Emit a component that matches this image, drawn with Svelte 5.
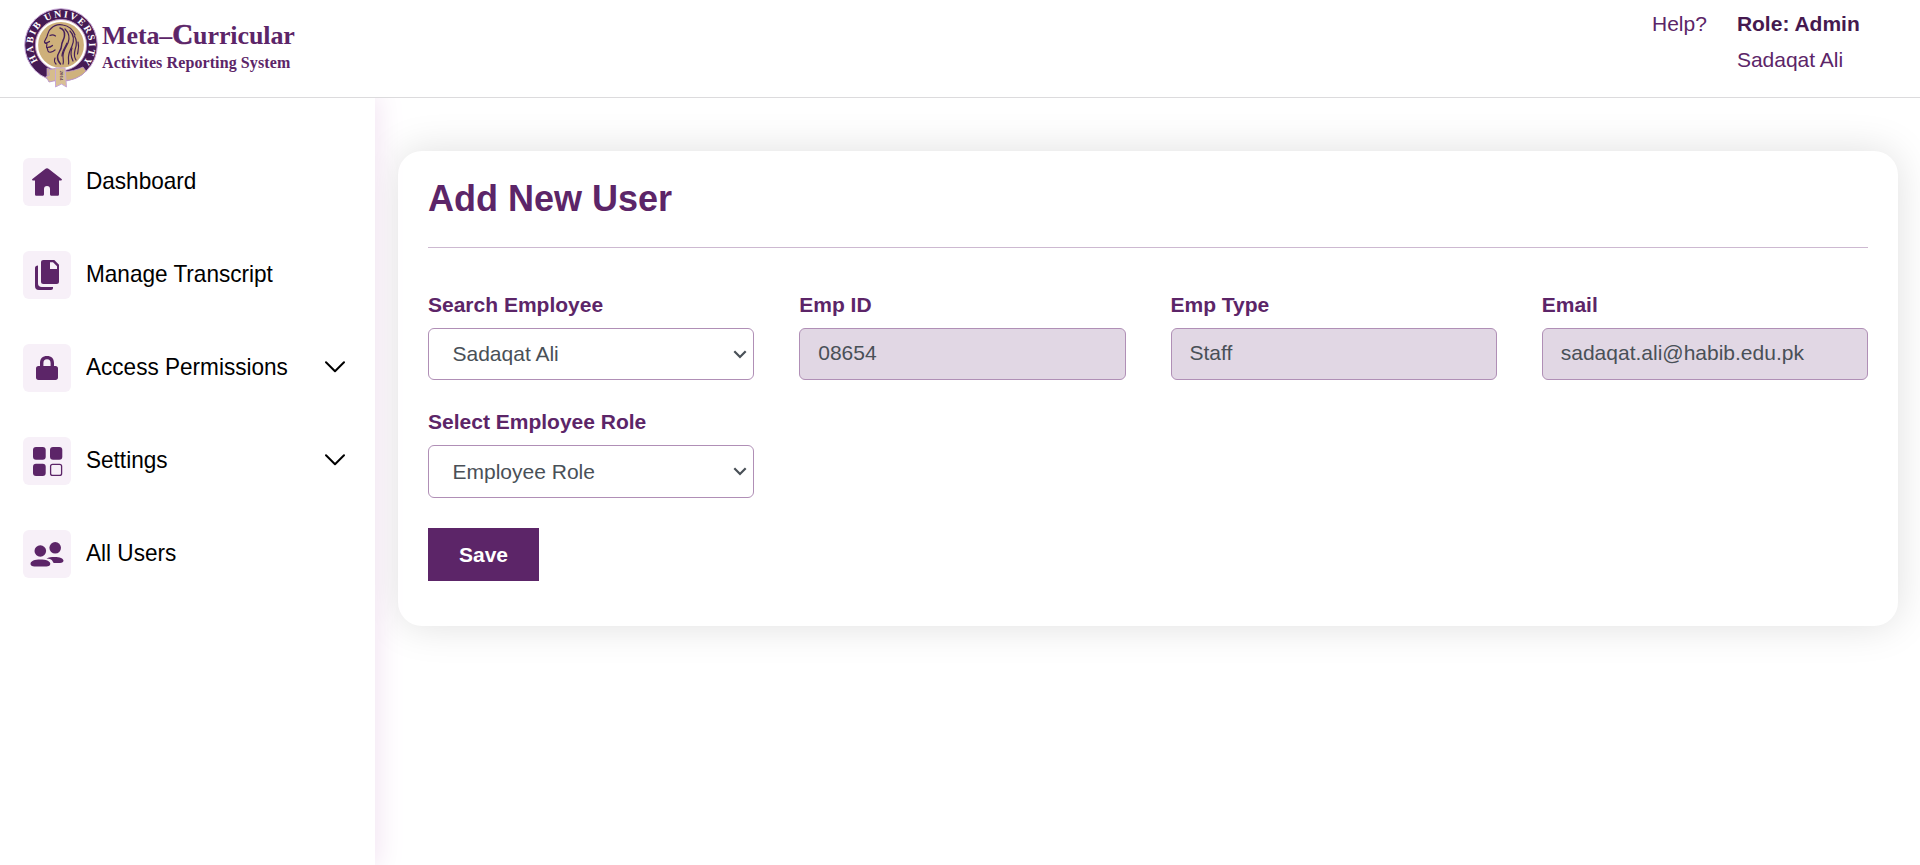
<script>
  const nav = [
    { label: 'Dashboard', icon: 'home' },
    { label: 'Manage Transcript', icon: 'copy' },
    { label: 'Access Permissions', icon: 'lock', expandable: true },
    { label: 'Settings', icon: 'grid', expandable: true },
    { label: 'All Users', icon: 'users' }
  ];
  const fields = [
    { label: 'Search Employee', value: 'Sadaqat Ali', select: true },
    { label: 'Emp ID', value: '08654' },
    { label: 'Emp Type', value: 'Staff' },
    { label: 'Email', value: 'sadaqat.ali@habib.edu.pk' },
    { label: 'Select Employee Role', value: 'Employee Role', select: true }
  ];
</script>

<div class="page">
  <header>
    <div class="brand">
      <svg class="seal" width="76" height="82" viewBox="0 0 76 82">
        <defs><path id="ring" d="M14.500 54.800A28 28 0 1 1 59.500 54.800" /></defs>
        <circle cx="37" cy="38" r="36.300" fill="#451a54" stroke="#c9a9d8" stroke-width="1" />
        <circle cx="37" cy="38" r="25.600" fill="#ceb07a" stroke="#b893c8" stroke-width="1" />
        <circle cx="37" cy="38" r="24" fill="none" stroke="#fff" stroke-width="2.200" />
        <text class="ringtext"><textPath href="#ring" startOffset="1" textLength="123" lengthAdjust="spacing">HABIB UNIVERSITY</textPath></text>
        <g fill="none" stroke="#45205a" stroke-width="1.200" stroke-linecap="round" stroke-linejoin="round">
          <path d="M27 21.500c3-3 8-4.500 12-3.500 6 1 10 5 12 10M27 21.500c-3 2-3 5-4 8l-2.500 5c0 1.500 1 2 2.500 2l-.5 3.500c1 1 1 2 1.500 4 1 2 4 1.500 7-1" />
          <path d="M26 28.500c2-1 4-.5 5.500.5M21.500 36c2-.5 3-.5 4-1.500M23 40.500c2 0 4-.5 5.500-2" />
          <path d="M36 21c3 1 5 4 4.500 8-.5 4-3 6-3 10s-4 7-4 11c0 3 1 5 3 7" stroke-width="1.500" />
          <path d="M41 22c4 4 5 9 3 14-2 4-5 8-5 13 0 3 1 6 0 8M46 24c4 4 4 10 2 15s-4 8-3.500 13c0 2 .5 3 0 5M50.500 29c3 5 2 10 .5 14-1 4-1 7 1 10M54 35c1.500 5 0 9-.5 12" />
          <path d="M31 51c-1 3-1 4 1 6M43 36c-2 5-5 8-5 13M48 41c-2 5-1 9 1 13" />
        </g>
        <path d="M23 61c12 5 23 5 36-1l3 4c-7 8-18 10.500-29 9.500l-10-3z" fill="#cfb27d" stroke="#b995cc" stroke-width=".8" />
        <path d="M24.500 63l8.500-2 1 12-9 2-1.500-3-2-2 4-2z" fill="#d6bc8d" stroke="#b995cc" stroke-width=".9" />
        <path d="M31.500 61h9.500l1.500 19-5-3-6 3z" fill="#d9c093" stroke="#c8a8d7" />
        <text class="year" transform="translate(35.500 63.500) rotate(90)">2014</text>
      </svg>
      <div class="wordmark">
        <strong>Meta–<b>C</b>urricular</strong>
        <span>Activites Reporting System</span>
      </div>
    </div>
    <div class="account">
      <a class="help" href="#help">Help?</a>
      <div class="user"><strong>Role: Admin</strong><span>Sadaqat Ali</span></div>
    </div>
  </header>

  <div class="body">
    <nav>
      {#each nav as item}
        <div class="item">
          <span class="tile">
            {#if item.icon === 'home'}
              <svg viewBox="0 0 48 48"><path d="M24 10.300c.7 0 1.300.3 1.800.7l12.500 9.800c1.200 1 .8 1.700-.4 1.700H36v13.700c0 1-.6 1.600-1.600 1.600H28.500c-1 0-1.500-.6-1.500-1.500V31c0-2-1-3-3-3s-3 1-3 3v5.300c0 .9-.5 1.500-1.500 1.500h-5.900c-1 0-1.600-.6-1.600-1.600V22.500h-1.900c-1.200 0-1.600-.7-.4-1.700L22.200 11c.5-.4 1.100-.7 1.800-.7z" /></svg>
            {:else if item.icon === 'copy'}
              <svg viewBox="0 0 48 48"><path fill-rule="evenodd" d="M20.500 9h10.800L36 13.800V30.500c0 1.700-.8 2.500-2.500 2.500h-13c-1.700 0-2.500-.8-2.500-2.500v-19c0-1.700.8-2.500 2.500-2.500zM27 11.200v6.900h7v-2.900l-4-4z" /><path d="M15 14.500v17.700c0 2.500 1.300 3.800 3.800 3.800H30v1c0 1.300-.7 2-2 2H16c-2.700 0-4-1.300-4-4V17c0-1.500 1-2.500 3-2.500z" /></svg>
            {:else if item.icon === 'lock'}
              <svg viewBox="0 0 48 48"><path fill-rule="evenodd" d="M17 22v-3c0-4.400 2.600-7 7-7s7 2.600 7 7v3h1.500c1.600 0 2.500.9 2.500 2.500v9c0 1.600-.9 2.500-2.500 2.500h-17c-1.600 0-2.500-.9-2.500-2.500v-9c0-1.600.9-2.500 2.500-2.500zm3.400 0h7.200v-2.800c0-2.600-1.200-3.900-3.600-3.900s-3.600 1.300-3.600 3.900z" /></svg>
            {:else if item.icon === 'grid'}
              <svg viewBox="0 0 48 48"><rect x="10" y="10" width="12.700" height="12.700" rx="3" /><rect x="27" y="10" width="12.300" height="12.700" rx="3" /><rect x="10" y="26.700" width="12.700" height="12.300" rx="3" /><rect x="27.600" y="27.300" width="11" height="11.100" rx="2" fill="none" stroke="#5c2568" stroke-width="1.300" /></svg>
            {:else}
              <svg viewBox="0 0 48 48"><circle cx="17.300" cy="21" r="5.800" /><circle cx="32.200" cy="17.800" r="5.800" /><path d="M7.500 33.800c0-2.700 4.300-4.200 9.800-4.200s10 1.500 10 4.200c0 1.700-1.500 2.700-4 2.700H11.500c-2.500 0-4-1-4-2.700zM23.500 28.500c2-1.200 5-1.600 8-1.600 5.300 0 9 1.500 9 3.700 0 1.400-1.200 2.400-3.500 2.400h-5.500c-1.500 0-1.500-1-2-2-.7-1.500-2.800-2.100-6-2.500z" /></svg>
            {/if}
          </span>
          <span class="label">{item.label}</span>
          {#if item.expandable}
            <svg class="chevron" width="20" height="12" viewBox="0 0 20 12"><path d="M1 1.200l9 9 9-9" /></svg>
          {/if}
        </div>
      {/each}
    </nav>

    <main>
      <section class="card">
        <h1>Add New User</h1>
        <form>
          {#each fields as field}
            <label>
              {field.label}
              {#if field.select}
                <span class="control">
                  <select><option>{field.value}</option></select>
                  <svg class="arrow" width="14" height="9" viewBox="0 0 14 9"><path d="M1.300 1.300L7 7l5.700-5.700" /></svg>
                </span>
              {:else}
                <input value={field.value} disabled />
              {/if}
            </label>
          {/each}
        </form>
        <button type="button">Save</button>
      </section>
    </main>
  </div>
</div>

<style>
  :global(body) { background: #fff; overflow: hidden; }
  .page, .page * { box-sizing: border-box; }
  .page { height: 865px; display: flex; flex-direction: column; font-family: "Liberation Sans", Arial, sans-serif; font-size: 21px; color: #5c2568; }
  header { height: 98px; flex: none; display: flex; justify-content: space-between; border-bottom: 1px solid #dcdbdd; background: #fff; }
  .brand { display: flex; padding: 7px 0 0 24px; }
  .seal { flex: none; }
  .ringtext { font: bold 9.800px "Liberation Serif", serif; fill: #fff; }
  .year { font: bold 5px "Liberation Serif", serif; fill: #5c3b53; }
  .wordmark { display: flex; flex-direction: column; padding: 12px 0 0 2px; font-family: "Liberation Serif", serif; white-space: nowrap; }
  .wordmark strong { font-size: 26px; line-height: 34px; letter-spacing: -.1px; }
  .wordmark strong b { font-size: 29px; line-height: 20px; -webkit-text-stroke: .6px #5c2568; }
  .wordmark span { font-size: 16px; font-weight: bold; line-height: 20px; letter-spacing: .1px; }
  .account { display: flex; gap: 30px; width: 268px; padding-top: 6px; line-height: 36px; }
  .help { color: inherit; text-decoration: none; }
  .user { display: flex; flex-direction: column; }
  .user strong { color: #45194f; }
  .body { flex: 1; display: flex; min-height: 0; }
  nav { width: 375px; flex: none; padding: 60px 30px 0 23px; display: flex; flex-direction: column; gap: 45px; background: #fff; box-shadow: 0 0 26px 3px #f2e3f2; clip-path: inset(0 -50px 0 0); }
  .item { height: 48px; display: flex; align-items: center; color: #000; font-size: 24px; }
  .tile { width: 48px; height: 48px; flex: none; border-radius: 6px; background: #f7f0f8; margin-right: 14.500px; }
  .tile svg { display: block; width: 48px; height: 48px; fill: #5c2568; }
  .label { flex: 1; min-width: 0; line-height: 28px; margin-bottom: 2px; white-space: nowrap; transform: scaleX(.94); transform-origin: left; }
  .chevron { flex: none; fill: none; stroke: #000; stroke-width: 2; stroke-linecap: round; stroke-linejoin: round; margin-bottom: 2px; }
  main { flex: 1; padding: 53px 22px 0 23px; }
  .card { height: 475px; border-radius: 24px; background: #fff; box-shadow: 0 0 40px rgba(0, 0, 0, .13); padding: 27px 30px 0; }
  h1 { margin: 0; height: 70px; border-bottom: 1px solid #cdb9d1; font-size: 36px; line-height: 42px; }
  form { display: grid; grid-template-columns: repeat(4, 1fr); column-gap: 45px; row-gap: 28px; padding-top: 43px; }
  label { display: flex; flex-direction: column; font-weight: bold; line-height: 28px; gap: 9px; }
  .control { position: relative; display: block; }
  input, select { display: block; width: 100%; height: 52px; border: 1px solid #b08fb6; border-radius: 6px; font: 21px "Liberation Sans", Arial, sans-serif; color: #495057; background: #fff; opacity: 1; outline: 0; }
  input { padding: 0 18px 2px; background: #e1d7e4; }
  select { appearance: none; padding: 0 24px 1px 23.500px; }
  label:last-child select { height: 53px; }
  .arrow { position: absolute; right: 7px; top: 22px; fill: none; stroke: #495057; stroke-width: 2.200; pointer-events: none; }
  button { display: block; margin-top: 30px; width: 111px; height: 53px; border: 0; border-radius: 0; background: #5c2568; color: #fff; font: bold 21px "Liberation Sans", Arial, sans-serif; }
</style>
